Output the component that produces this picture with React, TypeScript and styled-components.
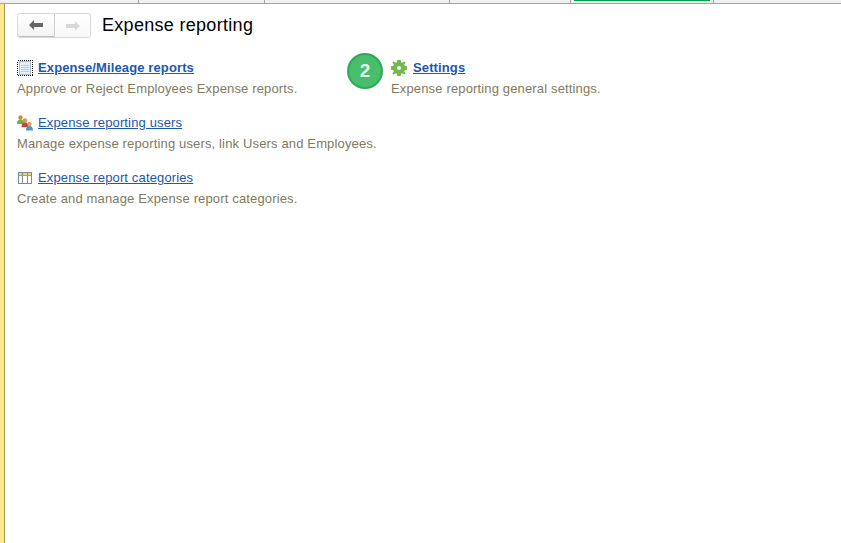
import React from "react";
import styled, { createGlobalStyle } from "styled-components";

const Global = createGlobalStyle`
  html, body { margin: 0; padding: 0; height: 100%; background: #fff; overflow: hidden; }
  #root { height: 100%; }
`;

const Page = styled.div`
  width: 841px; height: 543px; display: flex; flex-direction: column;
  font-family: "Liberation Sans", Arial, sans-serif; overflow: hidden;
`;
const TabStrip = styled.div`
  height: 3px; flex: none; display: flex; background: #f0f0f0; border-bottom: 1px solid #a3a3a3;
`;
const TabCell = styled.div<{ $w: number; $active?: boolean }>`
  width: ${p => p.$w}px; flex: none; box-sizing: border-box; height: 3px;
  border-right: 1px solid #a3a3a3; position: relative;
  ${p => p.$active ? `&::after { content: ""; position: absolute; left: 3px; right: 3px; top: 0; height: 1px; background: #00a050; }` : ""}
`;
const Body = styled.div`flex: 1; display: flex; min-height: 0;`;
const SideEdge = styled.div`
  width: 4px; flex: none; background: #fbe88f; border-right: 1px solid #a89a50;
`;
const Content = styled.main`flex: 1; padding: 9px 0 0 12px; min-width: 0;`;
const Header = styled.header`display: flex; align-items: center; height: 25px;`;
const NavGroup = styled.div`
  display: flex; width: 74px; height: 25px; box-sizing: border-box;
  border: 1px solid #d8d8d8; border-radius: 3px; background: linear-gradient(#fff, #f8f8f8);
`;
const NavButton = styled.button<{ $on?: boolean }>`
  border: 0; padding: 0; margin: 0; display: flex; align-items: center; justify-content: center;
  background: ${p => p.$on ? "linear-gradient(#fff, #f3f3f3)" : "transparent"};
  width: ${p => p.$on ? 37 : 35}px;
  ${p => p.$on ? "border-right: 1px solid #cfcfcf; border-bottom: 1px solid #bdbdbd; border-radius: 3px 0 0 3px;" : ""}
`;
const Title = styled.h1`
  margin: 0 0 0 11px; font-size: 18px; font-weight: 400; color: #000; line-height: 25px; letter-spacing: .3px;
`;
const Columns = styled.div`display: flex; margin-top: 21px;`;
const LeftColumn = styled.div`width: 374px; flex: none; display: flex; flex-direction: column; gap: 19px;`;
const RightColumn = styled.div`position: relative;`;
const Item = styled.section`display: flex; flex-direction: column; height: 36px;`;
const ItemHead = styled.div<{ $wide?: boolean }>`
  display: flex; align-items: center; height: 18px; gap: ${p => p.$wide ? 6 : 5}px;
`;
const IconBox = styled.span`width: 16px; height: 16px; flex: none; display: block; & svg { display: block; }`;
const ItemLink = styled.a<{ $bold?: boolean }>`
  color: #1c57b0; font-size: 13px; line-height: 18px; text-decoration: underline;
  font-weight: ${p => p.$bold ? 700 : 400}; letter-spacing: ${p => p.$bold ? ".12px" : ".14px"};
`;
const ItemText = styled.p`
  margin: 4px 0 0; font-size: 13px; line-height: 15px; color: #7f7a60; letter-spacing: .15px; white-space: nowrap;
`;
const StepBadge = styled.div`
  position: absolute; left: -44px; top: -6px; width: 36px; height: 36px; box-sizing: border-box;
  border-radius: 50%; background: #48bd6c; border: 2px solid #2fa955; color: #e8f7ec;
  display: flex; align-items: center; justify-content: center; font-size: 19px; font-weight: 700;
`;

const Arrow = ({ color }: { color: string }) => (
  <svg width="14" height="10" viewBox="0 0 14 10"><path d="M0 5 5 0v3h9v4H5v3z" fill={color} /></svg>
);
const Flip = styled.span`display: flex; transform: scaleX(-1);`;
const ReportIcon = () => (
  <svg width="16" height="16" viewBox="0 0 16 16" shapeRendering="crispEdges">
    <rect x="2.500" y="1.500" width="11" height="13" fill="#e6edf4" stroke="#a9bbcd" />
    <path d="M4 5.500h8M4 7.500h8M4 9.500h8M4 11.500h8" stroke="#bccddd" />
    <rect x=".5" y=".5" width="15" height="15" fill="none" stroke="#111" strokeDasharray="1 1" />
  </svg>
);
const UsersIcon = () => (
  <svg width="16" height="16" viewBox="0 0 16 16">
    <circle cx="3.500" cy="2.500" r="2.200" fill="#c98e45" /><path d="M0 9c0-3 1.200-4.500 3.500-4.500S7 6 7 9z" fill="#6fae4a" />
    <circle cx="8" cy="5.500" r="2.200" fill="#d29a58" /><path d="M4.500 12c0-3 1.200-4.500 3.500-4.500S11.500 9 11.500 12z" fill="#cc3f3a" />
    <circle cx="12.500" cy="9" r="2.200" fill="#d9a662" /><path d="M9 15.500c0-3 1.200-4.500 3.500-4.500S16 12.500 16 15.500z" fill="#4f93c9" />
  </svg>
);
const TableIcon = () => (
  <svg width="16" height="16" viewBox="0 0 16 16" shapeRendering="crispEdges">
    <rect x="1.500" y="2.500" width="13" height="11" fill="#fff" stroke="#7a8d9b" />
    <rect x="2" y="3" width="12" height="2" fill="#f2d65c" />
    <path d="M5.500 3v10M10.500 3v10" stroke="#7a8d9b" />
    <path d="M2 5.500h12" stroke="#8fa0ac" />
  </svg>
);
const GearIcon = () => (
  <svg width="16" height="16" viewBox="0 0 16 16">
    <path fillRule="evenodd" fill="#72b84a" d="M6.300 0h3.400l.3 2.200 1.400.6L13.200 1.400l1.400 1.400-1.400 1.800.6 1.400 2.200.3v3.400l-2.200.3-.6 1.400 1.400 1.800-1.400 1.400-1.800-1.400-1.400.6-.3 2.200H6.300L6 13.800l-1.400-.6-1.800 1.400-1.400-1.400 1.400-1.800-.6-1.400L0 9.700V6.300l2.200-.3.6-1.400-1.400-1.800 1.400-1.400 1.800 1.400L6 2.200zM8 6a2 2 0 1 0 0 4 2 2 0 0 0 0-4z" />
  </svg>
);

const tabs = [139, 126, 185, 121, 143];

export default function App() {
  return (
    <Page>
      <Global />
      <TabStrip>
        {tabs.map((w, i) => <TabCell key={i} $w={w} $active={i === 4} />)}
      </TabStrip>
      <Body>
        <SideEdge />
        <Content>
          <Header>
            <NavGroup>
              <NavButton $on aria-label="Back"><Arrow color="#666" /></NavButton>
              <NavButton aria-label="Forward"><Flip><Arrow color="#d8d8d8" /></Flip></NavButton>
            </NavGroup>
            <Title>Expense reporting</Title>
          </Header>
          <Columns>
            <LeftColumn>
              <Item>
                <ItemHead><IconBox><ReportIcon /></IconBox><ItemLink $bold href="#">Expense/Mileage reports</ItemLink></ItemHead>
                <ItemText>Approve or Reject Employees Expense reports.</ItemText>
              </Item>
              <Item>
                <ItemHead><IconBox><UsersIcon /></IconBox><ItemLink href="#">Expense reporting users</ItemLink></ItemHead>
                <ItemText>Manage expense reporting users, link Users and Employees.</ItemText>
              </Item>
              <Item>
                <ItemHead><IconBox><TableIcon /></IconBox><ItemLink href="#">Expense report categories</ItemLink></ItemHead>
                <ItemText>Create and manage Expense report categories.</ItemText>
              </Item>
            </LeftColumn>
            <RightColumn>
              <StepBadge>2</StepBadge>
              <Item>
                <ItemHead $wide><IconBox><GearIcon /></IconBox><ItemLink $bold href="#">Settings</ItemLink></ItemHead>
                <ItemText>Expense reporting general settings.</ItemText>
              </Item>
            </RightColumn>
          </Columns>
        </Content>
      </Body>
    </Page>
  );
}
